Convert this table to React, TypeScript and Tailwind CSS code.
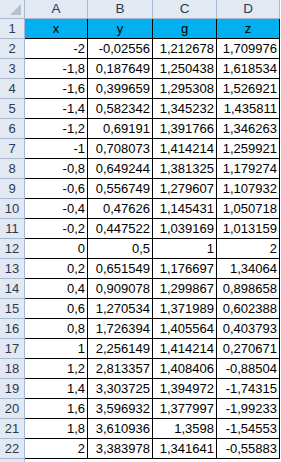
import React from "react";

const rows: [string, string, string, string][] = [
  ["-2", "-0,02556", "1,212678", "1,709976"],
  ["-1,8", "0,187649", "1,250438", "1,618534"],
  ["-1,6", "0,399659", "1,295308", "1,526921"],
  ["-1,4", "0,582342", "1,345232", "1,435811"],
  ["-1,2", "0,69191", "1,391766", "1,346263"],
  ["-1", "0,708073", "1,414214", "1,259921"],
  ["-0,8", "0,649244", "1,381325", "1,179274"],
  ["-0,6", "0,556749", "1,279607", "1,107932"],
  ["-0,4", "0,47626", "1,145431", "1,050718"],
  ["-0,2", "0,447522", "1,039169", "1,013159"],
  ["0", "0,5", "1", "2"],
  ["0,2", "0,651549", "1,176697", "1,34064"],
  ["0,4", "0,909078", "1,299867", "0,898658"],
  ["0,6", "1,270534", "1,371989", "0,602388"],
  ["0,8", "1,726394", "1,405564", "0,403793"],
  ["1", "2,256149", "1,414214", "0,270671"],
  ["1,2", "2,813357", "1,408406", "-0,88504"],
  ["1,4", "3,303725", "1,394972", "-1,74315"],
  ["1,6", "3,596932", "1,377997", "-1,99233"],
  ["1,8", "3,610936", "1,3598", "-1,54553"],
  ["2", "3,383978", "1,341641", "-0,55883"],
];

const font = { fontFamily: "'Liberation Sans', Arial, sans-serif" };

export default function App() {
  return (
    <div className="w-[281px] h-[462px] bg-white overflow-hidden" style={font}>
      <div className="grid grid-cols-[25px_63px_65px_64px_63px] text-[13px] leading-none">
        <div className="h-[19px] bg-[#e2e9f3] border-r border-b border-[#a7b9d0] relative">
          <div className="absolute right-[3px] bottom-[3px] w-0 h-0 border-l-[11px] border-l-transparent border-b-[11px] border-b-[#b6c0cc]" />
        </div>
        {["A", "B", "C", "D"].map((c) => (
          <div
            key={c}
            className="h-[19px] bg-[#e2e9f3] border-r border-b border-[#a7b9d0] flex items-center justify-center text-[#2a3a52] text-[13.5px]"
          >
            {c}
          </div>
        ))}
        <div className="h-[20px] bg-[#e2e9f3] border-r border-b border-[#a7b9d0] flex items-center justify-center text-[#2a3a52]">
          1
        </div>
        {["x", "y", "g", "z"].map((c) => (
          <div
            key={c}
            className="h-[20px] bg-[#00b0f0] border-r border-b border-black flex items-center justify-center text-black"
          >
            {c}
          </div>
        ))}
        {rows.map((r, i) => (
          <React.Fragment key={i}>
            <div className="h-[20px] bg-[#e2e9f3] border-r border-b border-[#a7b9d0] flex items-center justify-center text-[#2a3a52]">
              {i + 2}
            </div>
            {r.map((v, j) => (
              <div
                key={j}
                className="h-[20px] border-r border-b border-black flex items-center justify-end pr-[2px] text-black"
              >
                {v}
              </div>
            ))}
          </React.Fragment>
        ))}
        <div className="h-[4px] bg-[#e2e9f3] border-r border-[#a7b9d0]" />
      </div>
    </div>
  );
}
